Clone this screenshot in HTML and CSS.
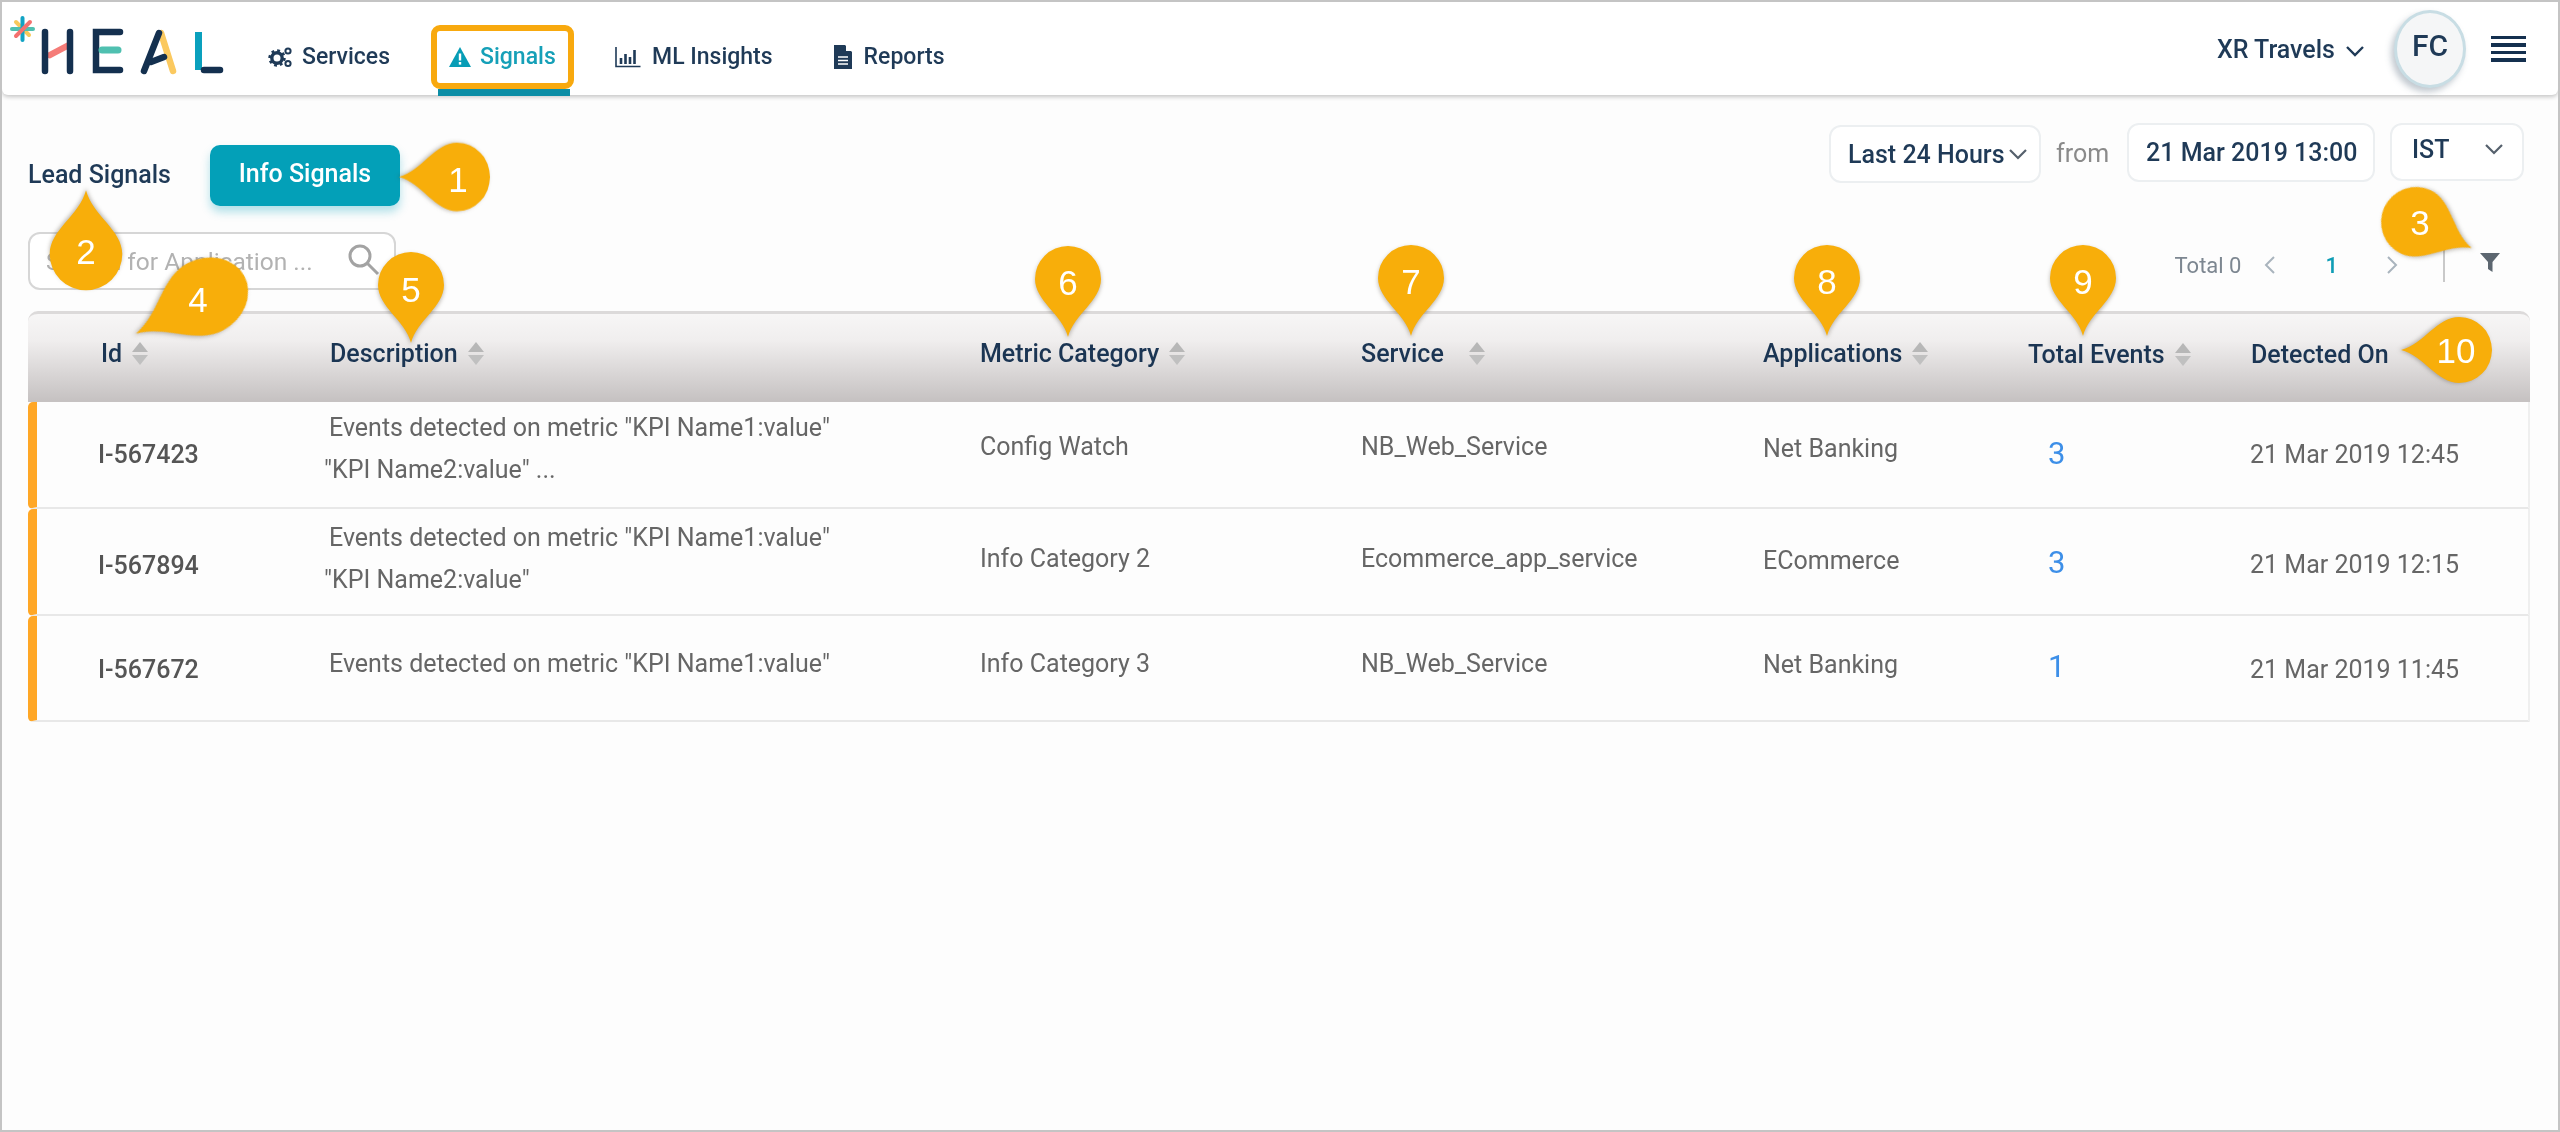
FILE: index.html
```html
<!DOCTYPE html>
<html lang="en">
<head>
<meta charset="utf-8">
<title>HEAL Signals</title>
<link rel="stylesheet" href="styles.css">
</head>
<body>
<div class="page">
  <header class="topbar">
    <svg class="logo" viewBox="0 0 230 80" width="230" height="80" role="img" aria-label="HEAL">
      <g stroke-linecap="round" stroke-width="4">
        <line x1="16" y1="20" x2="29" y2="33" stroke="#f7c95c"/>
        <line x1="12" y1="27" x2="33" y2="27" stroke="#4fc0b0"/>
        <line x1="22.5" y1="16" x2="22.5" y2="38" stroke="#12a3c4"/>
        <line x1="16" y1="34" x2="30" y2="20" stroke="#f4726f"/>
      </g>
      <g stroke-width="6.5" fill="none" stroke-linecap="round">
        <line x1="50" y1="53" x2="67" y2="44" stroke="#f57c78"/>
        <line x1="45" y1="30" x2="45" y2="69" stroke="#14304f"/>
        <line x1="70" y1="30" x2="70" y2="69" stroke="#14304f"/>
        <path d="M120 30H96V68H120" stroke="#14304f"/>
        <line x1="102" y1="48" x2="118" y2="48" stroke="#4fc0b0" stroke-width="7"/>
        <line x1="161" y1="31" x2="173" y2="69" stroke="#fbc95f"/>
        <line x1="159" y1="31" x2="144" y2="69" stroke="#14304f"/>
        <line x1="151" y1="60" x2="164" y2="55" stroke="#14304f"/>
        <line x1="198.5" y1="30" x2="198.5" y2="68" stroke="#0aa0bd" stroke-linecap="butt" stroke-width="7"/>
        <line x1="204" y1="68" x2="220" y2="68" stroke="#14304f"/>
      </g>
    </svg>
    <nav class="nav">
      <a class="nav-item nav-services">
        <svg class="nav-icon" viewBox="0 0 26 24" width="26" height="24"><circle cx="9" cy="13" r="5.2" fill="none" stroke="#1f3a57" stroke-width="3.4"/><circle cx="9" cy="13" r="7.4" fill="none" stroke="#1f3a57" stroke-width="2.6" stroke-dasharray="2.8 3"/><circle cx="20" cy="6" r="2.6" fill="none" stroke="#1f3a57" stroke-width="2"/><circle cx="20" cy="18.5" r="2.6" fill="none" stroke="#1f3a57" stroke-width="2"/></svg>
        Services
      </a>
      <a class="nav-item nav-active">
        <svg class="nav-icon" viewBox="0 0 24 24" width="24" height="24"><path d="M12 2 23 22H1Z" fill="#079db6"/><rect x="10.8" y="8.5" width="2.4" height="7" fill="#fff"/><rect x="10.8" y="17" width="2.4" height="2.6" fill="#fff"/></svg>
        Signals
      </a>
      <a class="nav-item nav-ml">
        <svg class="nav-icon" viewBox="0 0 26 22" width="26" height="22"><path d="M1 1V20.5H25.5" fill="none" stroke="#1f3a57" stroke-width="1.6"/><path d="M6 12v6M10.500 8v10M15 11v7M19.500 4v14" stroke="#1f3a57" stroke-width="2.6"/></svg>
        ML Insights
      </a>
      <a class="nav-item nav-reports">
        <svg class="nav-icon" viewBox="0 0 18 24" width="18" height="24"><path d="M0 0H11L18 7V24H0Z" fill="#1f3a57"/><path d="M12 0 18 6H12Z" fill="#fff"/><path d="M4 12H14M4 15.500H14M4 19H14" stroke="#fff" stroke-width="1.6"/></svg>
        Reports
      </a>
    </nav>
    <div class="top-right">
      <span class="account">XR Travels</span>
      <svg class="chev" viewBox="0 0 20 12" width="20" height="12"><path d="M2 2 10 10 18 2" fill="none" stroke="#1f3a57" stroke-width="2.4"/></svg>
      <span class="avatar">FC</span>
      <span class="burger"><i></i><i></i><i></i><i></i></span>
    </div>
  </header>

  <main class="main">
    <div class="controls">
      <div class="tabs">
        <span class="tab">Lead Signals</span>
        <span class="tab tab-on">Info Signals</span>
      </div>
      <div class="time">
        <span class="box box-range">Last 24 Hours<svg class="chev-g" viewBox="0 0 20 12" width="20" height="12"><path d="M2 2 10 10 18 2" fill="none" stroke="#55606c" stroke-width="2.200"/></svg></span>
        <span class="from">from</span>
        <span class="box box-date">21 Mar 2019 13:00</span>
        <span class="box box-tz">IST<svg class="chev-g" viewBox="0 0 20 12" width="20" height="12"><path d="M2 2 10 10 18 2" fill="none" stroke="#55606c" stroke-width="2.200"/></svg></span>
      </div>
    </div>

    <div class="tools">
      <div class="search">
        <span class="search-text">Search for Application ...</span>
        <svg class="search-icon" viewBox="0 0 34 34" width="34" height="34"><circle cx="14" cy="14" r="10" fill="none" stroke="#a3a3a3" stroke-width="3"/><path d="M21 21 32 32" stroke="#a3a3a3" stroke-width="3"/></svg>
      </div>
      <div class="pager">
        <span class="total">Total 0</span>
        <svg class="pg-arrow" viewBox="0 0 12 20" width="12" height="20"><path d="M10 2 2 10 10 18" fill="none" stroke="#a9b4bd" stroke-width="2"/></svg>
        <span class="pg-num">1</span>
        <svg class="pg-arrow pg-next" viewBox="0 0 12 20" width="12" height="20"><path d="M2 2 10 10 2 18" fill="none" stroke="#a9b4bd" stroke-width="2"/></svg>
        <span class="pg-div"></span>
        <svg class="filter" viewBox="0 0 20 20" width="20" height="20"><path d="M0 1H20L12.500 10V20L8 17V10Z" fill="#5c6670"/></svg>
      </div>
    </div>

    <section class="table">
      <div class="thead">
        <div class="th th-id">Id<i class="sort"></i></div>
        <div class="th">Description<i class="sort"></i></div>
        <div class="th">Metric Category<i class="sort"></i></div>
        <div class="th">Service<i class="sort sort-wide"></i></div>
        <div class="th">Applications<i class="sort"></i></div>
        <div class="th th-low">Total Events<i class="sort"></i></div>
        <div class="th th-low">Detected On</div>
      </div>
      <div class="row row-a">
        <div class="c c-id">I-567423</div>
        <div class="c c-desc">Events detected on metric "KPI Name1:value"<br>"KPI Name2:value" ...</div>
        <div class="c c-cat">Config Watch</div>
        <div class="c c-cat">NB_Web_Service</div>
        <div class="c c-app">Net Banking</div>
        <div class="c c-ev">3</div>
        <div class="c c-date">21 Mar 2019 12:45</div>
      </div>
      <div class="row row-b">
        <div class="c c-id">I-567894</div>
        <div class="c c-desc">Events detected on metric "KPI Name1:value"<br>"KPI Name2:value"</div>
        <div class="c c-cat">Info Category 2</div>
        <div class="c c-cat">Ecommerce_app_service</div>
        <div class="c c-app">ECommerce</div>
        <div class="c c-ev">3</div>
        <div class="c c-date">21 Mar 2019 12:15</div>
      </div>
      <div class="row row-c">
        <div class="c c-id">I-567672</div>
        <div class="c c-desc">Events detected on metric "KPI Name1:value"</div>
        <div class="c c-cat">Info Category 3</div>
        <div class="c c-cat">NB_Web_Service</div>
        <div class="c c-app">Net Banking</div>
        <div class="c c-ev">1</div>
        <div class="c c-date">21 Mar 2019 11:45</div>
      </div>
    </section>
  </main>

  <div class="pin pin-1"><svg class="pin-shape" viewBox="0 0 66 91" width="66" height="91"><path d="M33 91C27 68 0 55 0 33A33 33 0 0 1 66 33C66 55 39 68 33 91Z"/></svg><span class="pin-num">1</span></div>
  <div class="pin pin-2"><svg class="pin-shape" viewBox="0 0 66 91" width="66" height="91"><path d="M33 91C27 68 0 55 0 33A33 33 0 0 1 66 33C66 55 39 68 33 91Z"/></svg><span class="pin-num">2</span></div>
  <div class="pin pin-3"><svg class="pin-shape" viewBox="0 0 66 91" width="66" height="91"><path d="M33 91C27 68 0 55 0 33A33 33 0 0 1 66 33C66 55 39 68 33 91Z"/></svg><span class="pin-num">3</span></div>
  <div class="pin pin-4"><svg class="pin-shape" viewBox="0 0 66 91" width="66" height="91"><path d="M33 91C27 68 0 55 0 33A33 33 0 0 1 66 33C66 55 39 68 33 91Z"/></svg><span class="pin-num">4</span></div>
  <div class="pin pin-5"><svg class="pin-shape" viewBox="0 0 66 91" width="66" height="91"><path d="M33 91C27 68 0 55 0 33A33 33 0 0 1 66 33C66 55 39 68 33 91Z"/></svg><span class="pin-num">5</span></div>
  <div class="pin pin-6"><svg class="pin-shape" viewBox="0 0 66 91" width="66" height="91"><path d="M33 91C27 68 0 55 0 33A33 33 0 0 1 66 33C66 55 39 68 33 91Z"/></svg><span class="pin-num">6</span></div>
  <div class="pin pin-7"><svg class="pin-shape" viewBox="0 0 66 91" width="66" height="91"><path d="M33 91C27 68 0 55 0 33A33 33 0 0 1 66 33C66 55 39 68 33 91Z"/></svg><span class="pin-num">7</span></div>
  <div class="pin pin-8"><svg class="pin-shape" viewBox="0 0 66 91" width="66" height="91"><path d="M33 91C27 68 0 55 0 33A33 33 0 0 1 66 33C66 55 39 68 33 91Z"/></svg><span class="pin-num">8</span></div>
  <div class="pin pin-9"><svg class="pin-shape" viewBox="0 0 66 91" width="66" height="91"><path d="M33 91C27 68 0 55 0 33A33 33 0 0 1 66 33C66 55 39 68 33 91Z"/></svg><span class="pin-num">9</span></div>
  <div class="pin pin-10"><svg class="pin-shape" viewBox="0 0 66 91" width="66" height="91"><path d="M33 91C27 68 0 55 0 33A33 33 0 0 1 66 33C66 55 39 68 33 91Z"/></svg><span class="pin-num">10</span></div>
</div>
</body>
</html>
```
FILE: styles.css
```css
* { box-sizing: border-box; }
html, body { margin: 0; padding: 0; }
body {
  width: 2560px;
  height: 1132px;
  overflow: hidden;
  font-family: Roboto, "Liberation Sans", sans-serif;
  background: #fff;
}
.page {
  position: relative;
  width: 2560px;
  height: 1132px;
  border: 2px solid #c4c4c4;
  background: #fdfdfd;
  overflow: hidden;
  filter: blur(.6px);
}

/* top bar */
.topbar {
  display: flex;
  align-items: center;
  height: 93px;
  background: #fff;
  box-shadow: 0 2px 4px rgba(0, 0, 0, .22);
  border-radius: 0 0 6px 6px;
  position: relative;
}
.logo { flex: none; margin-left: -2px; align-self: flex-start; }
.nav { display: flex; align-items: center; margin-left: 38px; height: 93px; padding-top: 16px; }
.nav-item {
  display: flex;
  align-items: center;
  gap: 8px;
  font-size: 23px;
  font-weight: 500;
  color: #1f3a57;
  white-space: nowrap;
}
.nav-services { margin-right: 41px; }
.nav-active {
  position: relative;
  width: 143px;
  height: 64px;
  padding-left: 11px;
  gap: 8px;
  color: #15a0b8;
  border: 6px solid #f8a90e;
  border-radius: 9px;
  background: #fff;
}
.nav-active::after {
  content: "";
  position: absolute;
  left: 1px;
  right: -2px;
  bottom: -13px;
  height: 7px;
  background: #0c8ea6;
}
.nav-ml { margin-left: 41px; gap: 11px; }
.nav-reports { margin-left: 61px; gap: 12px; }
.nav-icon { flex: none; }
.top-right { display: flex; align-items: center; margin-left: auto; padding-right: 32px; }
.account { font-size: 25px; font-weight: 500; color: #1f3a57; margin-top: 2px; }
.chev { margin-left: 10px; margin-top: 5px; }
.avatar {
  display: flex;
  align-items: center;
  justify-content: center;
  width: 72px;
  height: 78px;
  margin-left: 29px;
  border-radius: 50%;
  background: #f5f6f7;
  border: 3px solid #c8dde4;
  box-shadow: -3px 4px 6px rgba(80, 100, 120, .35);
  font-size: 30px;
  font-weight: 500;
  color: #1f3a57;
  padding-bottom: 6px;
}
.burger { display: flex; flex-direction: column; gap: 4px; width: 35px; margin-left: 25px; }
.burger i { display: block; height: 3.500px; background: #14304f; }

/* main */
.main { padding: 28px 28px 0 26px; }
.controls { display: flex; justify-content: space-between; align-items: flex-start; height: 83px; }
.tabs { display: flex; align-items: flex-end; align-self: flex-end; height: 61px; }
.tab { font-size: 25px; font-weight: 500; color: #1f3a57; white-space: nowrap; margin-bottom: 17px; }
.tab-on {
  display: flex;
  align-items: center;
  justify-content: center;
  width: 190px;
  height: 61px;
  margin: 0 0 0 39px;
  padding-bottom: 4px;
  border-radius: 10px;
  background: #03a0b8;
  color: #fff;
  box-shadow: 0 6px 10px rgba(3, 160, 184, .3);
}
.time { display: flex; align-items: flex-start; padding-right: 6px; font-size: 25px; font-weight: 500; color: #1f3a57; }
.box {
  display: flex;
  align-items: center;
  height: 58px;
  border: 2px solid #eceff1;
  border-radius: 12px;
  background: #fff;
  white-space: nowrap;
}
.box-range { width: 212px; margin-top: 2px; padding-left: 17px; gap: 3px; }
.from { margin: 2px 0 0 15px; width: 71px; font-weight: 400; color: #8a8a8a; line-height: 58px; }
.box-date { width: 248px; height: 59px; padding-left: 17px; }
.box-tz { width: 134px; margin-left: 15px; padding-left: 20px; justify-content: space-between; padding-right: 18px; padding-bottom: 6px; }
.chev-g { flex: none; }
.tools { display: flex; justify-content: space-between; margin-top: 26px; height: 58px; }
.search {
  display: flex;
  align-items: center;
  justify-content: space-between;
  width: 368px;
  height: 58px;
  border: 2px solid #d6d6d6;
  border-radius: 12px;
  background: #fff;
  padding: 0 14px 0 16px;
}
.search-text { font-size: 24.5px; color: #b2b2b2; white-space: nowrap; }
.search-icon { flex: none; margin-bottom: 4px; }
.pager { display: flex; align-items: center; height: 58px; padding-right: 30px; margin-top: 4px; }
.total { font-size: 22px; color: #7d8791; white-space: nowrap; }
.pg-arrow { flex: none; margin-left: 23px; }
.pg-num { font-size: 22px; font-weight: 500; color: #0f9db5; margin: 0 48px 0 49px; }
.pg-next { margin-left: 0; }
.pg-div { width: 2px; height: 34px; background: #c9c9c9; margin: 0 35px 0 45px; }
.filter { flex: none; margin-bottom: 6px; }

/* table */
.table { margin-top: 21px; }
.thead, .row {
  display: grid;
  grid-template-columns: 232px 650px 381px 402px 265px 223px 1fr;
  width: 2502px;
}
.thead {
  height: 91px;
  padding-left: 70px;
  align-items: center;
  background: linear-gradient(#f7f6f6, #f0eeee 30%, #c6c2c2 98%);
  border-top: 3px solid #dcdada;
  border-radius: 10px 10px 0 0;
}
.th {
  display: flex;
  align-items: center;
  font-size: 25px;
  font-weight: 500;
  color: #1b3553;
  margin-bottom: 10px;
  white-space: nowrap;
}
.th-id { margin-left: 3px; }
.th-low { margin-bottom: 7px; }
.sort {
  display: inline-flex;
  flex-direction: column;
  gap: 3px;
  margin-left: 10px;
}
.sort-wide { margin-left: 25px; }
.sort::before, .sort::after {
  content: "";
  width: 0;
  height: 0;
  border-left: 8px solid transparent;
  border-right: 8px solid transparent;
}
.sort::before { border-bottom: 10px solid #b7b7b7; }
.sort::after { border-top: 10px solid #c0c0c0; }

.row {
  height: 107px;
  padding-left: 61px;
  align-items: center;
  border-left: 9px solid #ffa726;
  border-right: 2px solid #efefef;
  border-bottom: 2px solid #e8e8e8;
  border-radius: 5px 0 0 5px;
  background: #fdfdfd;
}
.row-a { --id: 0px; --desc: 12px; --cat: 16px; --app: 12px; --ev: 2px; --date: 0px; }
.row-b { --id: -8px; --desc: 6px; --cat: 6px; --app: 2px; --ev: -2px; --date: -6px; }
.row-c { height: 106px; --id: -2px; --desc: 8px; --cat: 10px; --app: 8px; --ev: 4px; --date: -2px; }
.c { font-size: 25px; color: #666; white-space: nowrap; }
.c-id { font-weight: 500; color: #555; margin-bottom: var(--id); }
.c-desc { margin-left: -6px; text-indent: 5px; line-height: 42px; margin-bottom: var(--desc); }
.c-cat { margin-bottom: var(--cat); }
.c-app { margin-bottom: var(--app); }
.c-ev { font-size: 31px; color: #3d8fe8; margin-left: 20px; margin-bottom: var(--ev); }
.c-date { margin-left: -1px; margin-bottom: var(--date); }

/* numbered callouts */
.pin { position: absolute; width: 66px; height: 91px; z-index: 5; }
.pin-shape {
  display: block;
  overflow: visible;
  transform-origin: 33px 33px;
  filter: drop-shadow(0 2px 2px rgba(60, 50, 30, .35));
}
.pin-shape path { fill: #f8ae0a; }
.pin-num {
  position: absolute;
  left: 0;
  top: 0;
  width: 66px;
  height: 66px;
  display: flex;
  align-items: center;
  justify-content: center;
  font-family: "Liberation Sans", Arial, sans-serif;
  font-size: 35px;
  color: #fff;
}
.pin-1 { left: 422px; top: 142px; }
.pin-1 .pin-shape { transform: rotate(90deg) scale(1.04, 1); }
.pin-1 .pin-num { transform: translate(1px, 3px); }
.pin-2 { left: 51px; top: 219px; }
.pin-2 .pin-shape { transform: rotate(180deg) scale(1.1); }
.pin-2 .pin-num { transform: translate(0, -2px); }
.pin-3 { left: 2381px; top: 187px; }
.pin-3 .pin-shape { transform: rotate(-65deg) scale(1.06); }
.pin-3 .pin-num { transform: translate(4px, 1px); }
.pin-4 { left: 170px; top: 262px; }
.pin-4 .pin-shape { transform: rotate(62deg) scale(1.15, 1.35); }
.pin-4 .pin-num { transform: translate(-7px, 3px); }
.pin-5 { left: 376px; top: 250px; }
.pin-5 .pin-num { transform: translate(0, 5px); }
.pin-6 { left: 1033px; top: 244px; }
.pin-6 .pin-num { transform: translate(0, 4px); }
.pin-7 { left: 1376px; top: 243px; }
.pin-7 .pin-num { transform: translate(0, 4px); }
.pin-8 { left: 1792px; top: 243px; }
.pin-8 .pin-num { transform: translate(0, 4px); }
.pin-9 { left: 2048px; top: 243px; }
.pin-9 .pin-num { transform: translate(0, 4px); }
.pin-10 { left: 2424px; top: 315px; }
.pin-10 .pin-shape { transform: rotate(90deg); }
.pin-10 .pin-num { transform: translate(-3px, 1px); }
```
